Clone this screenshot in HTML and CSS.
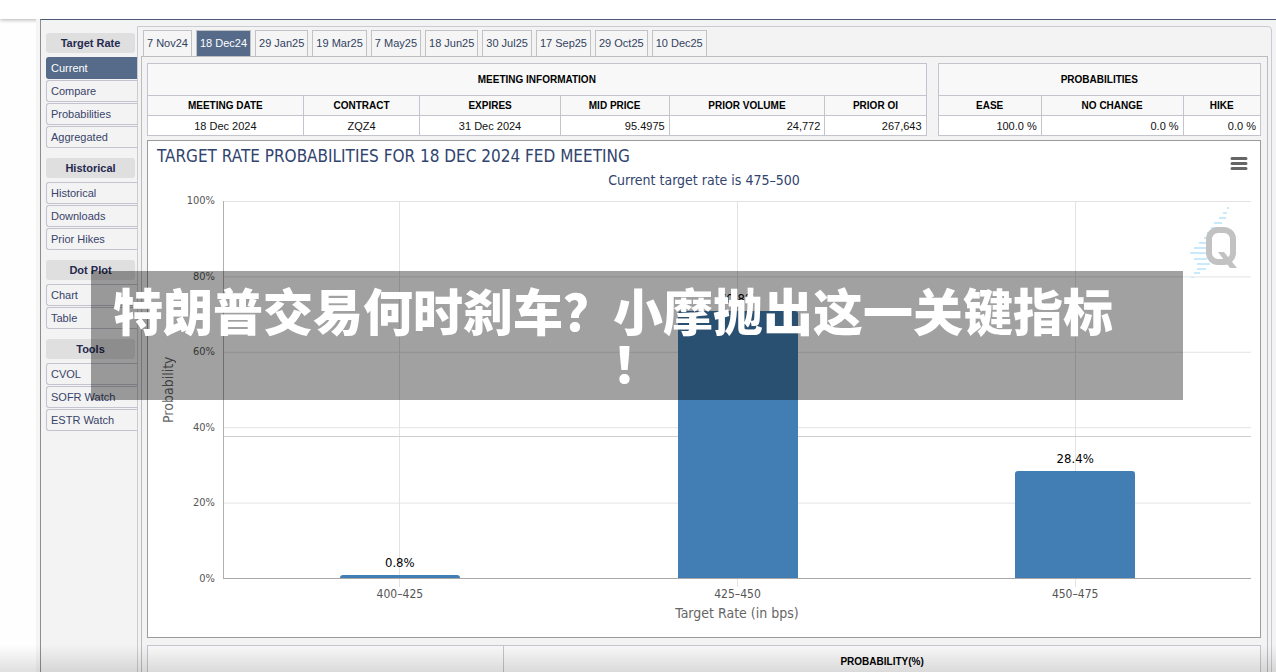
FILE: index.html
```html
<!DOCTYPE html>
<html lang="en">
<head>
<meta charset="utf-8">
<title>Target Rate Probabilities</title>
<link rel="stylesheet" href="styles.css">
</head>
<body>
<div class="topbar"></div>
<div class="app">
  <nav class="sidebar">
    <section class="group">
      <h2 class="group-title">Target Rate</h2>
      <a class="item active" href="#">Current</a>
      <a class="item" href="#">Compare</a>
      <a class="item" href="#">Probabilities</a>
      <a class="item" href="#">Aggregated</a>
    </section>
    <section class="group">
      <h2 class="group-title">Historical</h2>
      <a class="item" href="#">Historical</a>
      <a class="item" href="#">Downloads</a>
      <a class="item" href="#">Prior Hikes</a>
    </section>
    <section class="group">
      <h2 class="group-title">Dot Plot</h2>
      <a class="item" href="#">Chart</a>
      <a class="item" href="#">Table</a>
    </section>
    <section class="group">
      <h2 class="group-title">Tools</h2>
      <a class="item" href="#">CVOL</a>
      <a class="item" href="#">SOFR Watch</a>
      <a class="item" href="#">ESTR Watch</a>
    </section>
  </nav>
  <main class="panel">
    <div class="tabs">
      <button class="tab">7 Nov24</button>
      <button class="tab selected">18 Dec24</button>
      <button class="tab">29 Jan25</button>
      <button class="tab">19 Mar25</button>
      <button class="tab">7 May25</button>
      <button class="tab">18 Jun25</button>
      <button class="tab">30 Jul25</button>
      <button class="tab">17 Sep25</button>
      <button class="tab">29 Oct25</button>
      <button class="tab">10 Dec25</button>
    </div>
    <div class="content">
      <div class="tables">
        <table class="grid meeting">
          <colgroup><col class="w20"><col class="w15"><col class="w18"><col class="w14"><col class="w20"><col class="w13"></colgroup>
          <thead>
            <tr class="caption"><th colspan="6">MEETING INFORMATION</th></tr>
            <tr><th>MEETING DATE</th><th>CONTRACT</th><th>EXPIRES</th><th>MID PRICE</th><th>PRIOR VOLUME</th><th>PRIOR OI</th></tr>
          </thead>
          <tbody>
            <tr><td>18 Dec 2024</td><td>ZQZ4</td><td>31 Dec 2024</td><td class="num">95.4975</td><td class="num">24,772</td><td class="num">267,643</td></tr>
          </tbody>
        </table>
        <table class="grid odds">
          <colgroup><col class="w32"><col class="w44"><col></colgroup>
          <thead>
            <tr class="caption"><th colspan="3">PROBABILITIES</th></tr>
            <tr><th>EASE</th><th>NO CHANGE</th><th>HIKE</th></tr>
          </thead>
          <tbody>
            <tr><td class="num">100.0 %</td><td class="num">0.0 %</td><td class="num">0.0 %</td></tr>
          </tbody>
        </table>
      </div>
      <section class="chart">
        <header class="chart-head">
          <h1 class="chart-title">TARGET RATE PROBABILITIES FOR 18 DEC 2024 FED MEETING</h1>
          <button class="menu" aria-label="Chart menu">
            <svg width="18" height="15" viewBox="0 0 18 15"><path d="M2 2.5H16M2 7.5H16M2 12.5H16" stroke="#666" stroke-width="3" stroke-linecap="round"/></svg>
          </button>
        </header>
        <p class="subtitle">Current target rate is 475–500</p>
        <div class="figure">
          <div class="y-title">Probability</div>
          <div class="y-axis"><span>100%</span><span>80%</span><span>60%</span><span>40%</span><span>20%</span><span>0%</span></div>
          <div class="plot">
            <div class="marker"></div>
            <div class="column"><span class="value">0.8%</span><div class="bar" style="height:0.8%"></div></div>
            <div class="column"><span class="value">70.8%</span><div class="bar" style="height:70.8%"></div></div>
            <div class="column"><span class="value">28.4%</span><div class="bar" style="height:28.4%"></div></div>
            <svg class="logo" width="52" height="76" viewBox="0 0 52 76" aria-hidden="true">
              <path d="M38 6h2M34 11h4M30 16h7M25 21h8M22 26h7M18 31h7M15 36h6M10 41h10M5 46h14M1 51h17M5 57h13M8 62h13M8 67h9M5 71h6M2 76h3" stroke="#c8eafa" stroke-width="2"/>
              <rect x="20" y="28" width="24" height="32" rx="9" fill="none" stroke="#c2c2c2" stroke-width="6"/>
              <path d="M29 50h6l13 16h-7z" fill="#c2c2c2"/>
            </svg>
          </div>
          <div class="x-axis"><span>400–425</span><span>425–450</span><span>450–475</span></div>
          <div class="x-title">Target Rate (in bps)</div>
        </div>
      </section>
      <table class="grid lower">
        <colgroup><col class="w32"><col></colgroup>
        <thead><tr class="caption"><th></th><th>PROBABILITY(%)</th></tr></thead>
      </table>
    </div>
  </main>
</div>
<div class="fade"></div>
<div class="headline" lang="zh-CN">
  <div class="line">特朗普交易何时刹车？小摩抛出这一关键指标</div>
  <div class="line last">！</div>
</div>
</body>
</html>
```
FILE: styles.css
```css
* { box-sizing: border-box; }
body {
  margin: 0;
  height: 100vh;
  overflow: hidden;
  display: flex;
  flex-direction: column;
  position: relative;
  background: #fefefe;
  font: 11px/14px "Liberation Sans", Arial, sans-serif;
  color: #111;
}
.topbar {
  flex: none;
  height: 19px;
  background: #fff;
  box-shadow: 0 1px 4px rgba(0, 0, 0, .3);
  z-index: 1;
}
.app {
  flex: 1;
  min-height: 0;
  display: flex;
  align-items: flex-start;
  margin-left: 40px;
  padding: 6px 4px 0 5px;
  background: #f3f3f3;
  border-left: 1px solid #8d8d8d;
  border-top: 1px solid #4c5a78;
  box-shadow: -4px 0 0 #f5f5f5;
  z-index: 1;
}
.sidebar { flex: none; width: 91px; padding-top: 7px; }
.group { margin-bottom: 10px; }
.group-title {
  margin: 0 2px 4px 0;
  font-size: 11px;
  line-height: 20px;
  text-align: center;
  color: #25294f;
  background: #dfdfdf;
  border-radius: 3px;
}
.item {
  display: block;
  height: 22px;
  margin-bottom: 1px;
  padding-left: 4px;
  line-height: 20px;
  color: #38436a;
  text-decoration: none;
  border: 1px solid #c3c4cf;
  border-right: 0;
  border-radius: 3px 0 0 3px;
}
.item.active { background: #566b89; color: #fff; border-color: #566b89; }
.panel {
  flex: 1;
  min-width: 0;
  padding: 3px 3px 0;
  border: 1px solid #c9cad3;
  border-radius: 0 4px 0 0;
}
.tabs { display: flex; gap: 4px; padding-left: 2px; }
.tab {
  height: 26px;
  padding: 0 3px 2px;
  font: 11px/14px "Liberation Sans", Arial, sans-serif;
  color: #32435f;
  background: #f5f5f5;
  border: 1px solid #c2c2c4;
  border-bottom: 0;
  border-radius: 0;
  white-space: nowrap;
}
.tab.selected { background: #566b89; color: #fff; }
.content { padding: 6px 6px 0 5px; border: 1px solid #bcbcbe; border-bottom: 0; }
.tables { display: flex; gap: 11px; margin-bottom: 4px; }
.grid { border-collapse: collapse; table-layout: fixed; background: #fff; }
.grid th, .grid td {
  height: 20px;
  padding: 0 4px;
  border: 1px solid #c3c4cd;
  text-align: center;
}
.grid th { background: #f8f8f8; font-size: 10px; color: #000; }
.grid .caption th { height: 32px; }
.grid .num { text-align: right; }
.meeting { flex: 780; }
.odds { flex: 323; }
.w13 { width: 13%; }
.w14 { width: 14%; }
.w15 { width: 15%; }
.w18 { width: 18%; }
.w20 { width: 20%; }
.w32 { width: 32%; }
.w44 { width: 44%; }
.chart {
  margin-bottom: 7px;
  padding: 6px 9px 13px;
  background: #fff;
  border: 1px solid #9b9b9b;
  font-family: "DejaVu Sans Condensed", "Noto Sans", sans-serif;
}
.chart-head { display: flex; justify-content: space-between; }
.chart-title { margin: 0; font-size: 17px; line-height: 18px; font-weight: 400; color: #31446e; }
.menu { height: 30px; margin: 0 3px -12px 0; padding: 6px 0 0; border: 0; background: none; }
.subtitle { margin: 6px 0 12px; font-size: 14px; line-height: 18px; text-align: center; color: #31446e; }
.figure { display: grid; grid-template: 378px 30px auto / 22px 36px 1fr; }
.y-title {
  writing-mode: vertical-rl;
  transform: rotate(180deg);
  text-align: center;
  font-size: 14px;
  line-height: 22px;
  color: #666;
}
.y-axis {
  display: flex;
  flex-direction: column;
  justify-content: space-between;
  margin: -7px 0;
  text-align: right;
  color: #555;
}
.plot {
  position: relative;
  display: flex;
  margin-left: 8px;
  padding: 0 7px;
  border-left: 1px solid #b0b0b0;
  border-bottom: 1px solid #a8a8a8;
  background: linear-gradient(#e3e3e3 1px, transparent 1px) 0 0 / 100% 20%;
}
.column {
  flex: 1;
  display: flex;
  flex-direction: column;
  align-items: center;
  justify-content: flex-end;
  background: linear-gradient(#e3e3e3, #e3e3e3) center / 1px 100% no-repeat;
}
.value { font-size: 13px; line-height: 18px; margin-bottom: 3px; color: #000; }
.bar { width: 120px; max-width: 80%; background: #427eb4; border-radius: 3px 3px 0 0; z-index: 1; }
.marker { position: absolute; left: 0; right: 0; bottom: 37.4%; height: 1px; background: #cfcfcf; }
.logo { position: absolute; right: 10px; top: 1px; }
.x-axis { grid-column: 3; display: flex; padding: 0 7px 0 16px; }
.x-axis span {
  flex: 1;
  padding-top: 8px;
  text-align: center;
  font-size: 12px;
  color: #555;
  background: linear-gradient(#e3e3e3, #e3e3e3) top / 1px 8px no-repeat;
}
.x-title {
  grid-column: 3;
  height: 20px;
  margin-top: -5px;
  padding-left: 8px;
  text-align: center;
  font-size: 14px;
  line-height: 18px;
  color: #666;
}
.lower { width: 100%; }
.fade {
  position: absolute;
  inset: auto 0 0;
  height: 27px;
  z-index: 2;
  background: linear-gradient(transparent, rgba(0, 0, 0, .12));
}
.headline {
  position: absolute;
  left: 91px;
  right: 93px;
  top: 271px;
  z-index: 3;
  padding: 12px 22px 13px;
  overflow: hidden;
  background: rgba(0, 0, 0, .37);
  color: #fff;
  font: 900 50px/52px "Noto Sans CJK SC", sans-serif;
  white-space: nowrap;
}
.last { text-align: center; }
```
